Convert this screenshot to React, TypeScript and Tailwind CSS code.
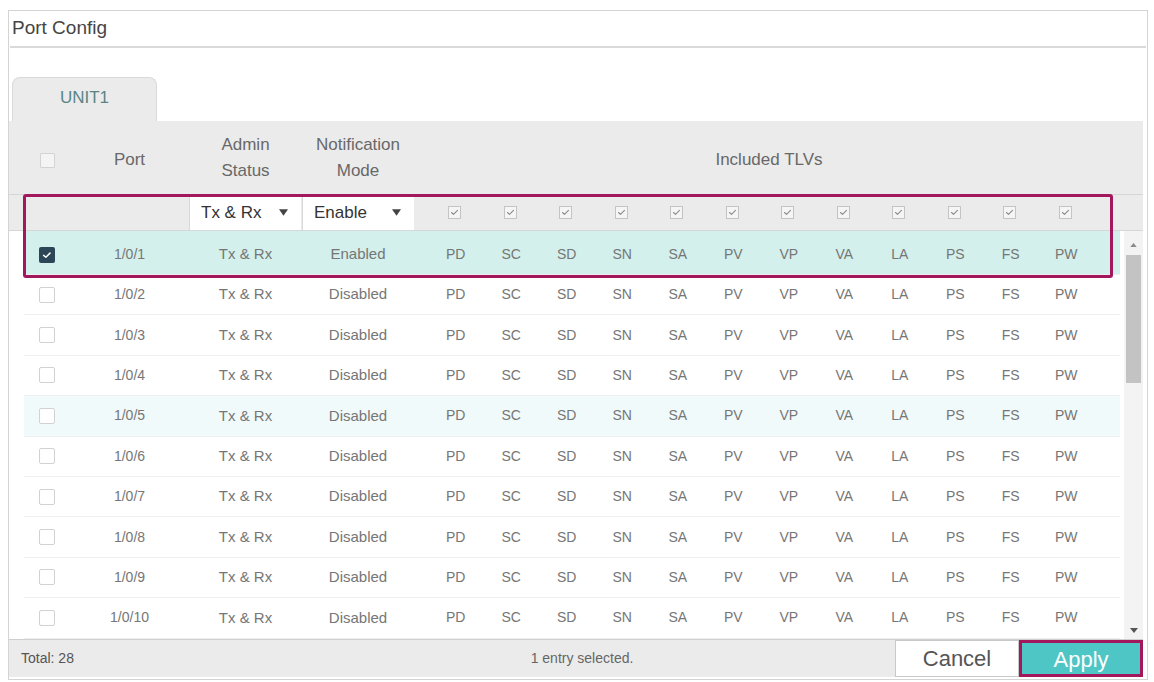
import React from "react";

const TLVS = ["PD", "SC", "SD", "SN", "SA", "PV", "VP", "VA", "LA", "PS", "FS", "PW"];

const rows = Array.from({ length: 10 }).map((_, i) => ({
  port: `1/0/${i + 1}`,
  admin: "Tx & Rx",
  mode: i === 0 ? "Enabled" : "Disabled",
  selected: i === 0,
  hover: i === 4,
}));

function RowCheck({ checked }: { checked?: boolean }) {
  if (checked) {
    return (
      <span className="flex h-[16px] w-[16px] items-center justify-center rounded-[2px] bg-[#2c4658]">
        <svg viewBox="0 0 16 16" className="h-[12px] w-[12px]" fill="none" stroke="white" strokeWidth="2" strokeLinecap="round" strokeLinejoin="round">
          <path d="M3.5 8.5l3 2.5 5.5-5.5" />
        </svg>
      </span>
    );
  }
  return <span className="block h-[16px] w-[16px] rounded-[2px] border border-[#d2d2d2] bg-white" />;
}

function SmallCheck() {
  return (
    <span className="flex h-[13px] w-[13px] items-center justify-center border border-[#c4c4c4] bg-[#f5f5f5]">
      <svg viewBox="0 0 13 13" className="h-[11px] w-[11px]" fill="none" stroke="#8c8c8c" strokeWidth="1.3" strokeLinecap="round" strokeLinejoin="round">
        <path d="M3 6.5l2.3 2.2L10 4" />
      </svg>
    </span>
  );
}

function Caret() {
  return (
    <svg viewBox="0 0 10 7" className="h-[7px] w-[9px]" fill="#444">
      <path d="M0 0h10L5 7z" />
    </svg>
  );
}

function Select({ label }: { label: string }) {
  return (
    <div className="flex h-full w-[112px] items-center justify-between border-l border-[#d8d8d8] bg-white pl-[11px] pr-[13px] text-[17px] text-[#333]">
      <span>{label}</span>
      <Caret />
    </div>
  );
}

export default function App() {
  return (
    <div className="h-[682px] w-[1154px] overflow-hidden bg-white pl-[8px] pt-[10px] font-['Liberation_Sans',Arial,sans-serif]">
      <div className="h-[670px] w-[1140px] border border-[#d4d4d4]">
        <div className="mx-[1px] flex h-[37px] items-center border-b-2 border-[#dadada] pl-[2px] text-[19px] text-[#454545]">
          Port Config
        </div>

        <div className="ml-[3px] mt-[29px] flex h-[44px] w-[145px] items-center justify-center rounded-t-[8px] border border-b-0 border-[#d9d9d9] bg-[#ebebeb] pb-[4px] text-[17px] text-[#5a8585]">
          UNIT1
        </div>

        <div className="relative w-[1134px]">
          {/* header */}
          <div className="flex h-[73px] items-center bg-[#ebebeb] pl-[15px] text-[17px] leading-[26px] text-[#686868]">
            <div className="flex w-[46px] justify-center pt-[6px]">
              <span className="block h-[15px] w-[15px] rounded-[1px] border border-[#d3d3d3] bg-[#f4f4f4]" />
            </div>
            <div className="w-[119px] pt-[4px] text-center">Port</div>
            <div className="w-[113px] text-center">
              Admin
              <br />
              Status
            </div>
            <div className="w-[126px] pr-[14px] text-center">
              Notification
              <br />
              Mode
            </div>
            <div className="w-[682px] pt-[4px] text-center">Included TLVs</div>
          </div>

          {/* filter row */}
          <div className="flex h-[37px] border-y border-[#d6d6d6] bg-[#ebebeb] pl-[15px]">
            <div className="w-[165px]" />
            <Select label="Tx & Rx" />
            <div className="w-[1px]" />
            <Select label="Enable" />
            <div className="w-[13px]" />
            {TLVS.map((t) => (
              <div key={t} className="flex w-[55.5px] items-center justify-center">
                <SmallCheck />
              </div>
            ))}
          </div>

          {/* body */}
          <div className="flex h-[408px]">
            <div className="w-[1115px] pl-[15px] pr-[4px]">
              {rows.map((r) => (
                <div
                  key={r.port}
                  className={`flex items-center border-b border-[#efefef] text-[15px] text-[#767676] ${
                    r.selected ? "h-[44px] bg-[#d3f0ec] pt-[4px]" : "h-[40.4px]"
                  } ${r.hover ? "bg-[#f1fafa]" : ""}`}
                >
                  <div className="flex w-[46px] justify-center">
                    <RowCheck checked={r.selected} />
                  </div>
                  <div className="w-[119px] text-center text-[14px]">{r.port}</div>
                  <div className="w-[113px] text-center">{r.admin}</div>
                  <div className="w-[126px] pr-[14px] text-center">{r.mode}</div>
                  {TLVS.map((t) => (
                    <div key={t} className="w-[55.5px] text-center text-[14px]">
                      {t}
                    </div>
                  ))}
                </div>
              ))}
            </div>
            <div className="flex w-[19px] flex-col items-center bg-[#f3f3f3] pt-[12px]">
              <svg viewBox="0 0 8 5" className="h-[4px] w-[7px]" fill="#8a8a8a">
                <path d="M0 5h8L4 0z" />
              </svg>
              <div className="mt-[8px] h-[128px] w-[15px] bg-[#c3c3c3]" />
              <div className="flex-1" />
              <svg viewBox="0 0 8 5" className="mb-[6px] h-[5px] w-[8px]" fill="#555">
                <path d="M0 0h8L4 5z" />
              </svg>
            </div>
          </div>

          {/* footer */}
          <div className="flex h-[38px] items-stretch border-t border-[#cfcfcf] bg-[#ebebeb]">
            <div className="flex flex-1 items-center pl-[12px] text-[14px] text-[#555]">Total: 28</div>
            <div className="flex items-center text-[14px] text-[#666]">1 entry selected.</div>
            <div className="flex flex-1 justify-end">
              <button
                type="button"
                className="w-[124px] border border-[#c8c8c8] bg-white text-[22px] text-[#555]"
              >
                Cancel
              </button>
              <button
                type="button"
                className="w-[124px] border-[3px] border-[#a3185c] bg-[#4fc6c6] text-[22px] text-white"
              >
                Apply
              </button>
            </div>
          </div>

          {/* highlight box */}
          <div className="pointer-events-none absolute left-[14px] top-[73px] h-[84px] w-[1090px] rounded-[3px] border-[3px] border-[#a3185c]" />
        </div>
      </div>
    </div>
  );
}
